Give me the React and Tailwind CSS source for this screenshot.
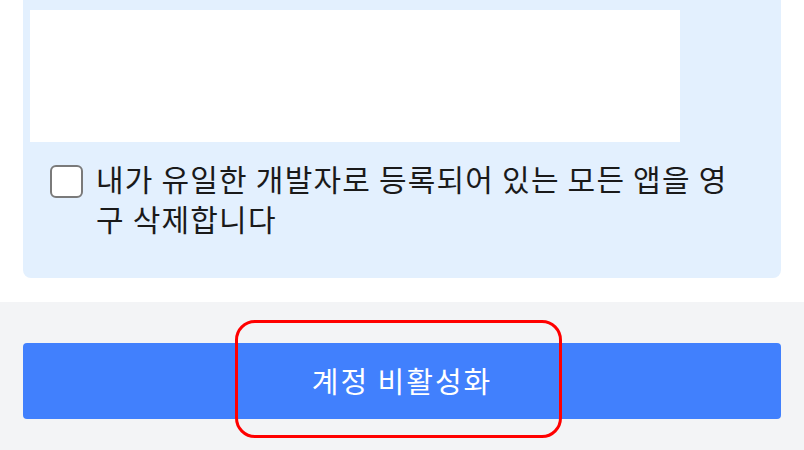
import React from "react";

const font = { fontFamily: '"Noto Sans CJK KR", "Noto Sans", sans-serif' };

export default function App() {
  return (
    <div className="w-[804px] h-[450px] overflow-hidden bg-white" style={font}>
      {/* Confirmation panel */}
      <div className="px-[23px] bg-white">
        <div className="bg-[#e3f0fe] rounded-b-[8px] pt-[10px] pb-[40px]">
          <div className="ml-[7px] w-[650px] h-[132px] bg-white" />
          <label className="flex items-start mt-[16px] ml-[27px]">
            <span className="mt-[7px] w-[33px] h-[33px] shrink-0 rounded-[6px] border-2 border-[#7a7a7a] bg-white" />
            <span className="ml-[13px] w-[645px] text-[30px] leading-[40px] text-[#1a1a1a] tracking-[1.2px]">
              내가 유일한 개발자로 등록되어 있는 모든 앱을 영구 삭제합니다
            </span>
          </label>
        </div>
      </div>
      <div className="h-[24px] bg-white" />
      {/* Footer actions */}
      <div className="bg-[#f3f4f6] h-[148px] px-[23px] pt-[41px]">
        <div className="relative">
          <button className="w-full h-[76px] rounded-[4px] bg-[#4180fd] text-white text-[29px] tracking-[2px] flex items-center justify-center">
            계정 비활성화
          </button>
          <div className="absolute left-[212px] top-[-23px] w-[327px] h-[118px] rounded-[20px] border-[3px] border-[#ff0000] pointer-events-none" />
        </div>
      </div>
    </div>
  );
}
